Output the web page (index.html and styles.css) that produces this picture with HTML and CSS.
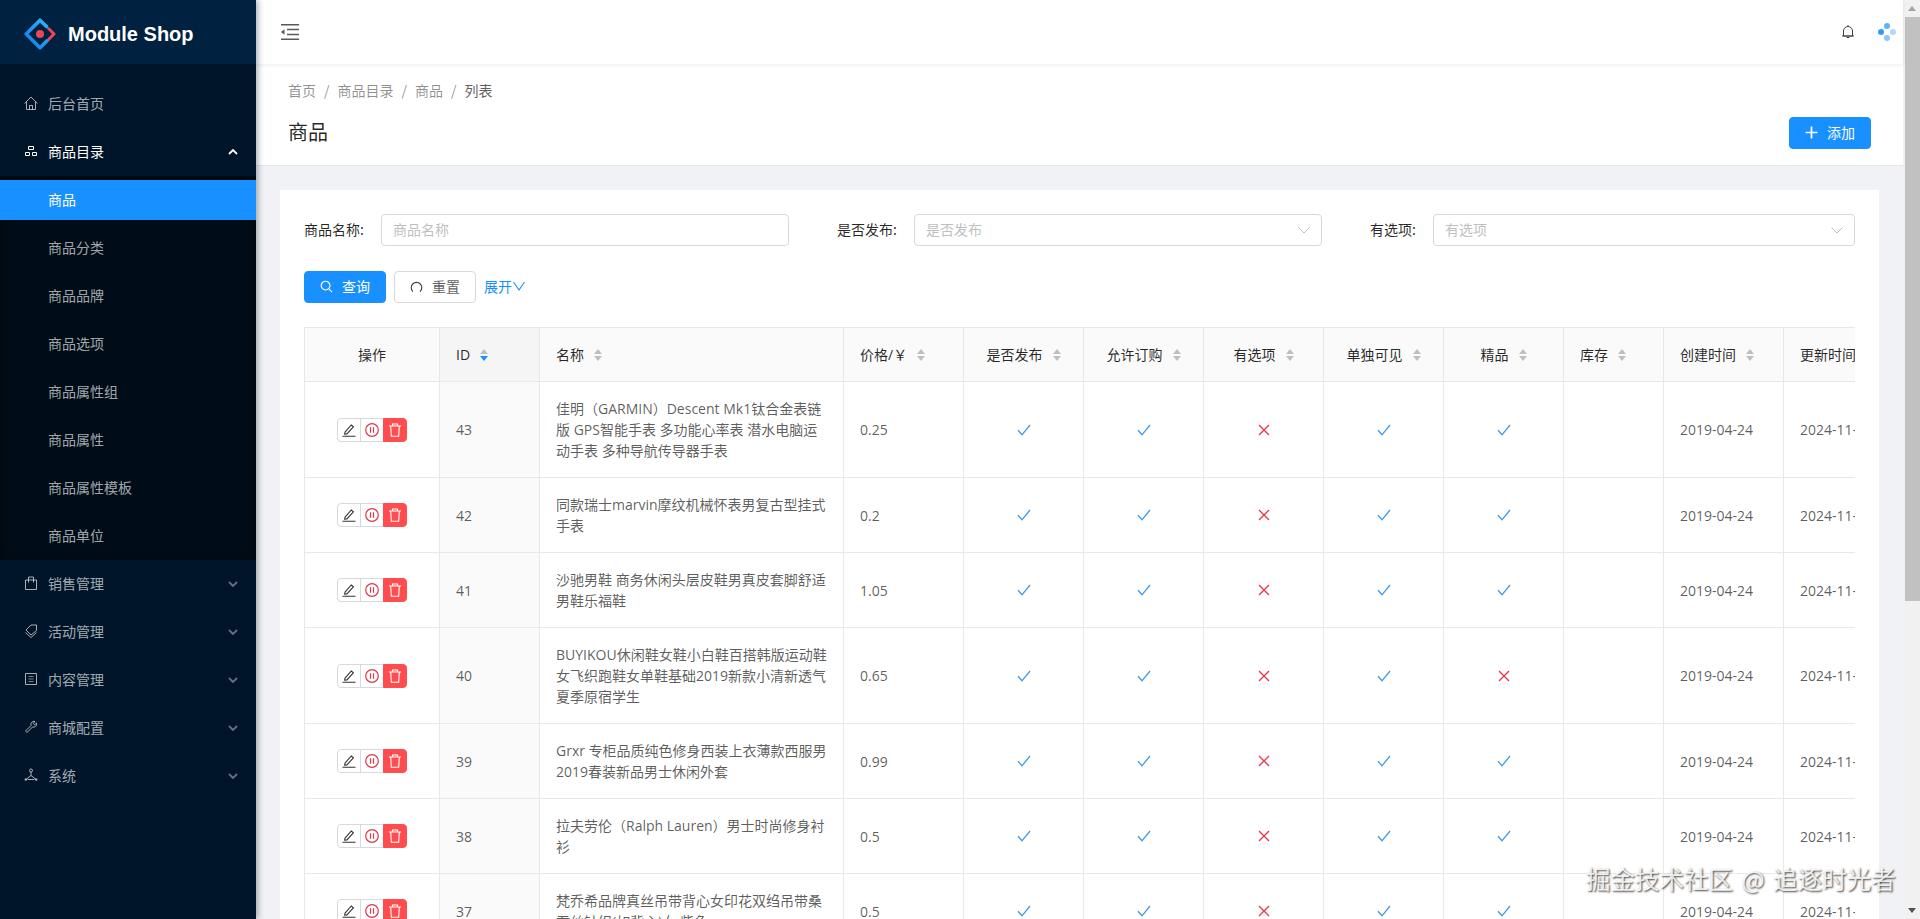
FILE: index.html
```html
<!DOCTYPE html>
<html lang="zh">
<head>
<meta charset="utf-8">
<title>Module Shop</title>
<link rel="stylesheet" href="styles.css">
</head>
<body>
<svg class="defs" width="0" height="0" aria-hidden="true">
  <defs>
    <linearGradient id="logo-blue" x1="1" y1="0" x2="0" y2="1">
      <stop offset="0" stop-color="#2db7f5"/>
      <stop offset="1" stop-color="#1677e8"/>
    </linearGradient>
  </defs>
  <symbol id="i-down" viewBox="0 0 10 6"><path d="M1 1l4 4 4-4" fill="none" stroke="currentColor" stroke-width="1.8"/></symbol>
  <symbol id="i-check" viewBox="0 0 14 12"><path d="M1 6.2l4 4.6L13 1" fill="none" stroke="#3f9be6" stroke-width="1.3"/></symbol>
  <symbol id="i-x" viewBox="0 0 12 12"><path d="M1 1l10 10M11 1L1 11" fill="none" stroke="#e8384f" stroke-width="1.4"/></symbol>
  <symbol id="i-edit" viewBox="0 0 14 14"><path d="M3 9.200L9.300 2l2.100 1.900-6.500 7-2.200.3zM.5 13.200h13" fill="none" stroke="#333" stroke-width="1.100"/></symbol>
  <symbol id="i-pause" viewBox="0 0 14 14"><circle cx="7" cy="7" r="6.300" fill="none" stroke="#e0374c" stroke-width="1.200"/><path d="M5.500 4.300v5.400M8.500 4.300v5.400" stroke="#e0374c" stroke-width="1.200"/></symbol>
  <symbol id="i-trash" viewBox="0 0 14 14"><path d="M1 3h12M4.500 3V1h5v2M2.700 3l.6 10.300h7.400L11.300 3" fill="none" stroke="#fff" stroke-width="1.100"/></symbol>
</svg>
<div class="app">
  <aside class="sider">
    <div class="brand">
      <svg class="logo" viewBox="0 0 32 32">
        <path d="M22.500 8.500L16 2.200 2.200 16 16 29.800l7-7" fill="none" stroke="url(#logo-blue)" stroke-width="3.600" stroke-linejoin="round" stroke-linecap="round"/>
        <path d="M24.800 10.800L30 16l-5.200 5.200" fill="none" stroke="#e8475b" stroke-width="3" stroke-linejoin="round" stroke-linecap="round"/>
        <circle cx="16" cy="16" r="4" fill="#e8475b"/>
      </svg>
      <span class="brand-name">Module Shop</span>
    </div>
    <nav class="menu">
      <a class="mi"><svg class="mi-icon" viewBox="0 0 14 14"><path d="M.5 7.500L7 1l6.500 6.500M2.500 6v7.500h9V6M5.500 13.500V9.500h3v4" fill="none" stroke="currentColor"/></svg>后台首页</a>
      <a class="mi mi-open"><svg class="mi-icon" viewBox="0 0 14 14"><path d="M4.500 2.500h5v3h-5zM1.500 8.500h4v3h-4zM8.500 8.500h4v3h-4z" fill="none" stroke="currentColor"/></svg>商品目录<svg class="mi-arrow up"><use href="#i-down"/></svg></a>
      <div class="sub">
        <a class="mi mi-sel">商品</a>
        <a class="mi">商品分类</a>
        <a class="mi">商品品牌</a>
        <a class="mi">商品选项</a>
        <a class="mi">商品属性组</a>
        <a class="mi">商品属性</a>
        <a class="mi">商品属性模板</a>
        <a class="mi">商品单位</a>
      </div>
      <a class="mi"><svg class="mi-icon" viewBox="0 0 14 14"><path d="M1.500 4h11v9.500h-11zM4.500 6.500V1h5v5.500" fill="none" stroke="currentColor"/></svg>销售管理<svg class="mi-arrow"><use href="#i-down"/></svg></a>
      <a class="mi"><svg class="mi-icon" viewBox="0 0 14 14"><path d="M7 1h5.500v5.500L7 11 2 6zM1.500 8.500L7 13.500l5.500-5" fill="none" stroke="currentColor"/></svg>活动管理<svg class="mi-arrow"><use href="#i-down"/></svg></a>
      <a class="mi"><svg class="mi-icon" viewBox="0 0 14 14"><path d="M1.500 1.500h11v11h-11z" fill="none" stroke="currentColor"/><path d="M4.500 4.500h5M4.500 7h5M4.500 9.500h5" stroke="currentColor" opacity=".7"/></svg>内容管理<svg class="mi-arrow"><use href="#i-down"/></svg></a>
      <a class="mi"><svg class="mi-icon" viewBox="0 0 14 14"><path d="M1.500 11L7 5.500a3.200 3.200 0 0 1 4-4L9.200 3.300l1.500 1.500L12.500 3a3.200 3.200 0 0 1-4 4L3 12.500z" fill="none" stroke="currentColor"/></svg>商城配置<svg class="mi-arrow"><use href="#i-down"/></svg></a>
      <a class="mi"><svg class="mi-icon" viewBox="0 0 14 14"><circle cx="7" cy="2.500" r="1.500" fill="none" stroke="currentColor"/><path d="M7 4v3.500L2.500 11M7 7.500l4.500 3.500M3.500 11.500h7" fill="none" stroke="currentColor"/><circle cx="1.800" cy="11.500" r="1.200" fill="currentColor"/><circle cx="12.200" cy="11.500" r="1.200" fill="currentColor"/></svg>系统<svg class="mi-arrow"><use href="#i-down"/></svg></a>
    </nav>
  </aside>

  <main class="main">
    <header class="topbar">
      <svg class="fold" viewBox="0 0 18 16"><path d="M0 .75h18M6 5.500h12M6 10.500h12M0 15.250h18" stroke="#595959" stroke-width="1.500"/><path d="M0 8l3.500-2.800v5.600z" fill="#595959"/></svg>
      <div class="top-right">
        <svg class="bell" viewBox="0 0 12 14"><path d="M1.500 11V6a4.500 4.500 0 0 1 9 0v5zM0 11h12M6 .2v1M4.700 12.500h2.600" fill="none" stroke="#404040" stroke-width="1"/></svg>
        <span class="dots"><i class="dot d1"></i><i class="dot d2"></i><i class="dot d3"></i><i class="dot d4"></i></span>
      </div>
    </header>
    <section class="page-head">
      <div class="crumbs">
        <span>首页</span><b>/</b><span>商品目录</span><b>/</b><span>商品</span><b>/</b><span class="last">列表</span>
      </div>
      <div class="head-row">
        <h1>商品</h1>
        <button class="btn btn-primary btn-add"><svg class="ic" viewBox="0 0 12 12"><path d="M6 .5v11M.5 6h11" stroke="#fff" stroke-width="1.600"/></svg>添加</button>
      </div>
    </section>
    <section class="content">
      <div class="card">
        <form class="filters">
          <div class="field"><label>商品名称:</label><div class="control ph">商品名称</div></div>
          <div class="field"><label>是否发布:</label><div class="control ph">是否发布<svg class="sel" viewBox="0 0 12 7"><path d="M.5.5L6 6l5.500-5.500" fill="none" stroke="#bfbfbf"/></svg></div></div>
          <div class="field"><label>有选项:</label><div class="control ph">有选项<svg class="sel" viewBox="0 0 12 7"><path d="M.5.5L6 6l5.500-5.500" fill="none" stroke="#bfbfbf"/></svg></div></div>
        </form>
        <div class="actions">
          <button class="btn btn-primary"><svg class="ic" viewBox="0 0 14 14"><circle cx="6" cy="6" r="4.700" fill="none" stroke="#fff" stroke-width="1.200"/><path d="M9.500 9.500L13 13" stroke="#fff" stroke-width="1.200"/></svg>查询</button>
          <button class="btn"><svg class="ic" viewBox="0 0 14 14"><path d="M3.200 12.500A5.700 5.700 0 1 1 10.800 12.500" fill="none" stroke="#404040" stroke-width="1.200"/></svg>重置</button>
          <a class="expand">展开<svg class="exp" viewBox="0 0 12 10"><path d="M.5 1L6 9l5.500-8" fill="none" stroke="#1890ff" stroke-width="1.100"/></svg></a>
        </div>
        <div class="table-wrap">
          <table class="grid">
            <colgroup>
              <col class="w135"><col class="w100"><col class="w304"><col class="w120"><col class="w120"><col class="w120"><col class="w120"><col class="w120"><col class="w120"><col class="w100"><col class="w120"><col class="w120">
            </colgroup>
            <thead>
              <tr>
                <th class="c">操作</th>
                <th class="sorted">ID<span class="sorter on"><i></i><i></i></span></th>
                <th>名称<span class="sorter"><i></i><i></i></span></th>
                <th>价格/￥<span class="sorter"><i></i><i></i></span></th>
                <th class="c">是否发布<span class="sorter"><i></i><i></i></span></th>
                <th class="c">允许订购<span class="sorter"><i></i><i></i></span></th>
                <th class="c">有选项<span class="sorter"><i></i><i></i></span></th>
                <th class="c">单独可见<span class="sorter"><i></i><i></i></span></th>
                <th class="c">精品<span class="sorter"><i></i><i></i></span></th>
                <th>库存<span class="sorter"><i></i><i></i></span></th>
                <th>创建时间<span class="sorter"><i></i><i></i></span></th>
                <th>更新时间<span class="sorter"><i></i><i></i></span></th>
              </tr>
            </thead>
            <tbody id="rows"></tbody>
          </table>
        </div>
      </div>
    </section>
  </main>

  <div class="scrollbar">
    <span class="sb-btn sb-up"></span>
    <span class="sb-thumb"></span>
    <span class="sb-track"></span>
    <span class="sb-btn sb-down"></span>
  </div>
</div>
<div class="watermark">掘金技术社区 @ 追逐时光者</div>
<script src="rows.js"></script>
</body>
</html>
```

FILE: rows.js
```js
var data = [
  [43, "佳明（GARMIN）Descent Mk1钛合金表链版 GPS智能手表 多功能心率表 潜水电脑运动手表 多种导航传导器手表", "0.25", 1],
  [42, "同款瑞士marvin摩纹机械怀表男复古型挂式手表", "0.2", 1],
  [41, "沙驰男鞋 商务休闲头层皮鞋男真皮套脚舒适男鞋乐福鞋", "1.05", 1],
  [40, "BUYIKOU休闲鞋女鞋小白鞋百搭韩版运动鞋女飞织跑鞋女单鞋基础2019新款小清新透气夏季原宿学生", "0.65", 0],
  [39, "Grxr 专柜品质纯色修身西装上衣薄款西服男2019春装新品男士休闲外套", "0.99", 1],
  [38, "拉夫劳伦（Ralph Lauren）男士时尚修身衬衫", "0.5", 1],
  [37, "梵乔希品牌真丝吊带背心女印花双绉吊带桑蚕丝针织(如背心)女 紫色", "0.5", 1]
];
var ck = '<svg class="yes"><use href="#i-check"/></svg>';
var no = '<svg class="no"><use href="#i-x"/></svg>';
document.getElementById("rows").innerHTML = data.map(function (r) {
  return '<tr><td class="c"><span class="ops">' +
    '<button class="op"><svg><use href="#i-edit"/></svg></button>' +
    '<button class="op"><svg><use href="#i-pause"/></svg></button>' +
    '<button class="op op-del"><svg><use href="#i-trash"/></svg></button></span></td>' +
    '<td class="sorted-cell">' + r[0] + '</td><td>' + r[1] + '</td><td>' + r[2] + '</td>' +
    '<td class="c">' + ck + '</td><td class="c">' + ck + '</td><td class="c">' + no + '</td><td class="c">' + ck + '</td>' +
    '<td class="c">' + (r[3] ? ck : no) + '</td><td></td><td>2019-04-24</td><td class="clip">2024-11-</td></tr>';
}).join("");
```

FILE: styles.css
```css
* { box-sizing: border-box; }
html, body { margin: 0; height: 919px; overflow: hidden; }
body {
  font-family: "Open Sans", "Noto Sans CJK SC", sans-serif;
  font-size: 14px;
  line-height: 21px;
  color: rgba(0,0,0,.65);
  background: #f0f2f5;
}
.defs { position: absolute; }
.app { display: flex; height: 919px; }

.sider {
  width: 256px;
  flex: none;
  background: #001529;
  box-shadow: 2px 0 6px rgba(0,21,41,.35);
  position: relative;
  z-index: 2;
  color: rgba(255,255,255,.65);
}
.brand { height: 64px; background: #002140; display: flex; align-items: center; padding: 4px 0 0 24px; }
.logo { width: 32px; height: 32px; margin-right: 12px; }
.brand-name { font: bold 20px "Liberation Sans", sans-serif; color: #fff; }
.menu { padding-top: 20px; }
.mi {
  display: flex;
  align-items: center;
  height: 40px;
  margin-bottom: 8px;
  padding: 0 0 2px 24px;
  font-family: "Noto Sans CJK SC", sans-serif;
  position: relative;
}
.mi-icon { width: 14px; height: 14px; margin-right: 10px; }
.mi-arrow { position: absolute; left: 228px; top: 17px; width: 10px; height: 6px; opacity: .6; }
.mi-arrow.up { transform: rotate(180deg); opacity: 1; color: #fff; }
.mi-open { color: #fff; }
.sub { background: #000c17; box-shadow: inset 0 2px 8px rgba(0,0,0,.45); margin: -4px 0 4px; padding: 4px 0; }
.sub .mi { padding-left: 48px; }
.sub .mi:last-child { margin-bottom: 0; }
.mi-sel { background: #1890ff; color: #fff; }

.main { flex: 1; min-width: 0; display: flex; flex-direction: column; }
.topbar {
  height: 64px;
  flex: none;
  background: #fff;
  box-shadow: 0 1px 4px rgba(0,21,41,.08);
  position: relative;
  z-index: 1;
  display: flex;
  align-items: center;
  justify-content: space-between;
  padding: 0 7px 0 25px;
}
.fold { width: 18px; height: 16px; }
.top-right { display: flex; align-items: center; gap: 24px; }
.bell { width: 12px; height: 14px; }
.dots { width: 18px; height: 18px; position: relative; display: block; }
.dot { position: absolute; width: 6px; height: 6px; border-radius: 50%; background: #1890ff; }
.d1 { left: 6px; top: 0; opacity: .7; }
.d2 { right: 0; top: 6px; opacity: .35; }
.d3 { left: 6px; bottom: 0; opacity: .5; }
.d4 { left: 0; top: 6px; opacity: .9; }

.page-head { height: 102px; flex: none; background: #fff; border-bottom: 1px solid #e8e8e8; padding: 16px 32px 0; }
.crumbs { display: flex; font-family: "Noto Sans CJK SC", sans-serif; color: rgba(0,0,0,.45); height: 21px; }
.crumbs b { font-weight: 400; margin: 0 8px; }
.crumbs .last { color: rgba(0,0,0,.65); }
.head-row { display: flex; justify-content: space-between; align-items: center; margin-top: 16px; height: 32px; }
h1 { margin: 0; padding-bottom: 2px; font: 400 20px/30px "Noto Sans CJK SC", sans-serif; color: rgba(0,0,0,.85); }

.btn {
  height: 32px;
  width: 82px;
  display: inline-flex;
  align-items: center;
  justify-content: center;
  border: 1px solid #d9d9d9;
  border-radius: 4px;
  background: #fff;
  color: rgba(0,0,0,.65);
  font: 14px "Noto Sans CJK SC", sans-serif;
  padding: 0 0 2px;
}
.btn-primary { background: #1890ff; border-color: #1890ff; color: #fff; }
.ic { width: 13px; height: 13px; margin-right: 9px; }

.content { flex: 1; min-height: 0; padding: 24px 24px 0; overflow: hidden; }
.card { background: #fff; height: 100%; padding: 24px; }
.filters { display: grid; grid-template-columns: repeat(3, 1fr); gap: 48px; }
.field { display: flex; align-items: center; height: 32px; }
.field label { margin-right: 17px; padding-bottom: 2px; color: rgba(0,0,0,.85); font-family: "Noto Sans CJK SC", sans-serif; white-space: nowrap; }
.control {
  flex: 1;
  height: 32px;
  border: 1px solid #d9d9d9;
  border-radius: 4px;
  padding: 0 11px 2px;
  display: flex;
  align-items: center;
  justify-content: space-between;
  font-family: "Noto Sans CJK SC", sans-serif;
}
.ph { color: #bfbfbf; }
.sel { width: 12px; height: 7px; margin-top: 2px; }
.actions { display: flex; align-items: center; gap: 8px; margin-top: 25px; }
.expand { color: #1890ff; font-family: "Noto Sans CJK SC", sans-serif; display: inline-flex; align-items: center; padding-bottom: 2px; }
.exp { width: 12px; height: 10px; margin-left: 1px; }

.table-wrap { margin-top: 24px; overflow: hidden; border-top: 1px solid #e8e8e8; border-left: 1px solid #e8e8e8; }
.grid { border-collapse: separate; border-spacing: 0; table-layout: fixed; width: 1599px; }
.w135 { width: 135px; } .w100 { width: 100px; } .w304 { width: 304px; } .w120 { width: 120px; }
th, td { border-right: 1px solid #e8e8e8; border-bottom: 1px solid #e8e8e8; padding: 16px; text-align: left; }
th { background: #fafafa; font-weight: 400; color: rgba(0,0,0,.85); white-space: nowrap; }
th.sorted { background: #f5f5f5; }
td.sorted-cell { background: #fafafa; }
.c { text-align: center; }
.clip { white-space: nowrap; }
.sorter { display: inline-block; width: 8px; height: 12px; margin-left: 10px; vertical-align: -1px; }
.sorter i { display: block; width: 0; height: 0; border: 4px solid transparent; }
.sorter i:first-child { border-top: 0; border-bottom: 5px solid #bfbfbf; margin-bottom: 2px; }
.sorter i:last-child { border-bottom: 0; border-top: 5px solid #bfbfbf; }
.sorter.on i:last-child { border-top-color: #1890ff; }
.yes { display: block; width: 14px; height: 12px; margin: 0 auto; }
.no { display: block; width: 12px; height: 12px; margin: 0 auto; }
.ops { display: flex; justify-content: center; }
.op {
  width: 24px;
  height: 24px;
  padding: 0;
  margin-left: -1px;
  background: #fff;
  border: 1px solid #d9d9d9;
  display: flex;
  align-items: center;
  justify-content: center;
}
.op:first-child { margin-left: 0; border-radius: 4px 0 0 4px; }
.op svg { width: 14px; height: 14px; }
.op-del { background: #ff4d4f; border-color: #ff4d4f; border-radius: 0 4px 4px 0; }

.scrollbar { width: 17px; flex: none; height: 919px; background: #f1f1f1; display: flex; flex-direction: column; align-items: stretch; }
.sb-btn { height: 17px; flex: none; display: flex; align-items: center; justify-content: center; }
.sb-btn::before { content: ""; border: 4px solid transparent; }
.sb-up::before { border-top: 0; border-bottom: 5px solid #a3a3a3; }
.sb-down::before { border-bottom: 0; border-top: 5px solid #505050; }
.sb-thumb { height: 584px; flex: none; background: #c1c1c1; margin-left: 2px; }
.sb-track { flex: 1; }

.watermark {
  position: absolute;
  left: 1586px;
  top: 863px;
  font: 24.500px/32px "Noto Sans CJK SC", sans-serif;
  word-spacing: 3px;
  color: rgba(255,255,255,.85);
  text-shadow: 1px 1px 2px rgba(0,0,0,.75);
  white-space: nowrap;
}
```
